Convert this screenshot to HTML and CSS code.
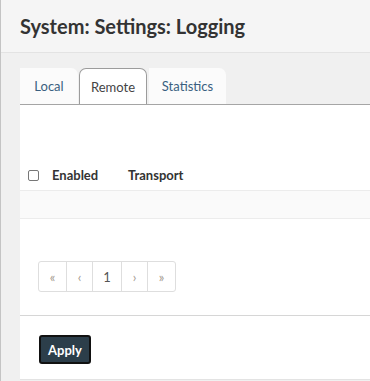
FILE: index.html
```html
<!DOCTYPE html>
<html lang="en">
<head>
  <meta charset="UTF-8">
  <meta name="viewport" content="width=device-width, initial-scale=1.0">
  <title>System: Settings: Logging</title>
  <link rel="stylesheet" href="styles.css">
</head>
<body>

  <div class="page">
    <header class="page-header">
      <h1>System: Settings: Logging</h1>
    </header>

    <main class="page-content">
      <ul class="tabs">
        <li class="tab tab-local">Local</li>
        <li class="tab tab-remote active">Remote</li>
        <li class="tab tab-stats">Statistics</li>
      </ul>

      <div class="panel">
        <table class="grid">
          <thead>
            <tr>
              <th class="col-check"><span class="checkbox"></span></th>
              <th class="col-enabled">Enabled</th>
              <th>Transport</th>
            </tr>
          </thead>
          <tbody>
            <tr class="empty-row"><td colspan="3"></td></tr>
          </tbody>
        </table>

        <div class="pager">
          <ul class="pagination">
            <li class="muted">&laquo;</li>
            <li class="muted">&lsaquo;</li>
            <li class="current">1</li>
            <li class="muted">&rsaquo;</li>
            <li class="muted">&raquo;</li>
          </ul>
        </div>

        <div class="actions">
          <button class="btn-apply" type="button">Apply</button>
        </div>
      </div>
    </main>
  </div>

</body>
</html>
```

FILE: styles.css
```css
body {
  margin: 0;
  padding: 0;
  font-family: Lato, "Open Sans", sans-serif;
  background-color: #f0f0f0;
  color: #333;
}
.page {
  border-left: 1px solid #c4c4c4;
  min-height: 381px;
}
.page-header {
  height: 52px;
  background-color: #f5f5f5;
  border-bottom: 1px solid #e3e3e3;
  padding-left: 19px;
  display: flex;
  align-items: center;
}
.page-header h1 {
  margin: 0;
  font-size: 20px;
  font-weight: 700;
  color: #333;
}
.page-content {
  padding: 15px 0 0 19px;
}
.tabs {
  list-style: none;
  margin: 0;
  padding: 0;
  display: flex;
  height: 36px;
  border-bottom: 1px solid #a5a5a5;
}
.tab {
  background-color: #fbfbfb;
  font-size: 13px;
  color: #3a5f80;
  display: flex;
  align-items: center;
  justify-content: center;
  box-sizing: border-box;
  border-radius: 0 7px 0 0;
  height: 36px;
}
.tab-local {
  width: 58px;
  margin-right: 1px;
}
.tab-remote {
  width: 68px;
  margin-right: 2px;
}
.tab-stats {
  width: 77px;
}
.tab.active {
  background-color: #fff;
  color: #444;
  border: 1px solid #9c9c9c;
  border-bottom: none;
  border-radius: 7px 7px 0 0;
  margin-bottom: -1px;
}
.panel {
  background-color: #fff;
  border-bottom: 1px solid #e3e3e3;
  height: 274px;
  display: flex;
  flex-direction: column;
}
.grid {
  width: 100%;
  border-collapse: collapse;
  margin-top: 55px;
}
.grid th {
  text-align: left;
  font-size: 13px;
  font-weight: 700;
  height: 30px;
  padding: 0;
  border-bottom: 1px solid #ececec;
}
.grid th.col-check {
  width: 24px;
  padding-left: 8px;
}
.col-enabled {
  width: 76px;
}
.checkbox {
  display: block;
  width: 9px;
  height: 9px;
  border: 1px solid #777;
  border-radius: 2px;
  margin-top: 1px;
}
.empty-row td {
  height: 27px;
  background-color: #fafafa;
  border-bottom: 1px solid #ececec;
  padding: 0;
}
.pager {
  padding: 42px 0 0 18px;
  height: 54px;
  border-bottom: 1px solid #d6d6d6;
}
.pagination {
  list-style: none;
  margin: 0;
  padding: 0;
  display: inline-flex;
  border: 1px solid #dedede;
  border-radius: 3px;
}
.pagination li {
  height: 29px;
  display: flex;
  align-items: center;
  justify-content: center;
  font-size: 13px;
  border-left: 1px solid #dedede;
}
.pagination li:first-child {
  border-left: none;
  width: 27px;
}
.pagination li:nth-child(2) {
  width: 25px;
}
.pagination li:nth-child(3) {
  width: 28px;
}
.pagination li:nth-child(4) {
  width: 25px;
}
.pagination li:nth-child(5) {
  width: 27px;
}
.pagination .muted {
  color: #a59c90;
}
.pagination .current {
  color: #555;
}
.actions {
  padding: 19px 0 0 19px;
}
.btn-apply {
  background-color: #2c3e4a;
  color: #fff;
  font-family: Lato, "Open Sans", sans-serif;
  font-size: 13px;
  font-weight: 700;
  border: 2px solid #111;
  border-radius: 3px;
  height: 29px;
  padding: 0 7px;
  cursor: pointer;
}
```
